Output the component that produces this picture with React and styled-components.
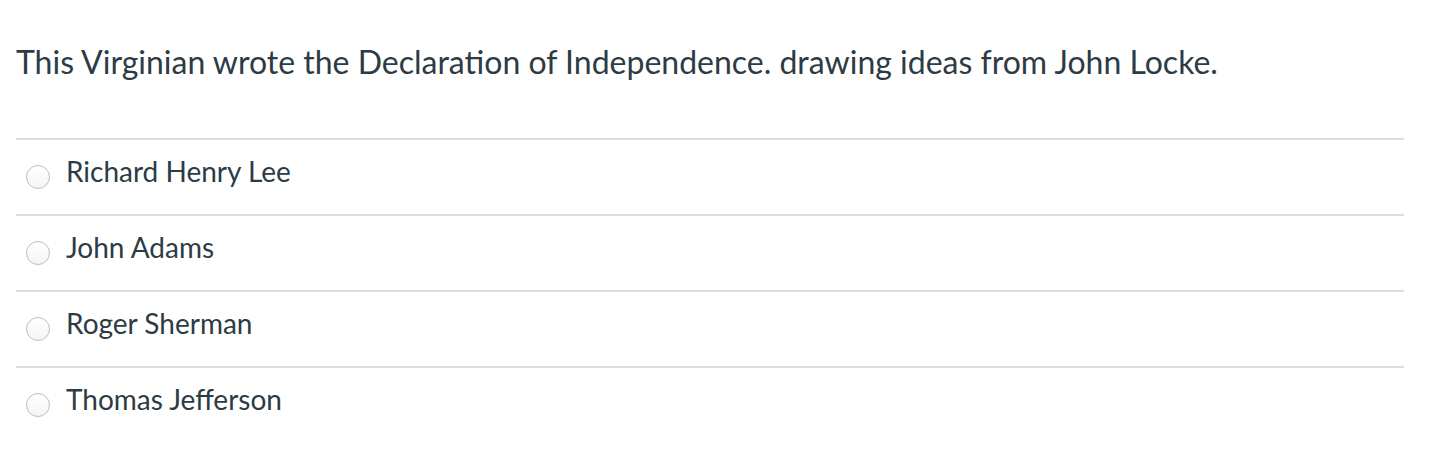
import React from "react";
import styled, { createGlobalStyle } from "styled-components";

const Global = createGlobalStyle`
  html, body { margin: 0; padding: 0; background: #fff; }
  body { font-family: Lato, "Noto Sans", sans-serif; color: #2d3b45; }
`;

const Page = styled.div`
  padding: 0 32px 0 16px;
`;

const Question = styled.div`
  font-size: 32px;
  line-height: 40px;
  padding: 42px 0 56px;
`;

const List = styled.div`
  display: flex;
  flex-direction: column;
`;

const Option = styled.label`
  display: flex;
  align-items: flex-start;
  box-sizing: border-box;
  height: 76px;
  padding-top: 15px;
  border-top: 2px solid #dcdcdc;
  cursor: pointer;
`;

const Radio = styled.span`
  width: 24px;
  height: 24px;
  border-radius: 50%;
  border: 1px solid #bdbdbd;
  box-sizing: border-box;
  margin: 10px 16px 0 10px;
  background: linear-gradient(#fff, #f5f5f5);
  flex: none;
`;

const OptionText = styled.span`
  font-size: 28px;
  line-height: 32px;
`;

const options = ["Richard Henry Lee", "John Adams", "Roger Sherman", "Thomas Jefferson"];

export default function App() {
  return (
    <Page>
      <Global />
      <Question>
        This Virginian wrote the Declaration of Independence. drawing ideas from John Locke.
      </Question>
      <List>
        {options.map((o) => (
          <Option key={o}>
            <Radio />
            <OptionText>{o}</OptionText>
          </Option>
        ))}
      </List>
    </Page>
  );
}
